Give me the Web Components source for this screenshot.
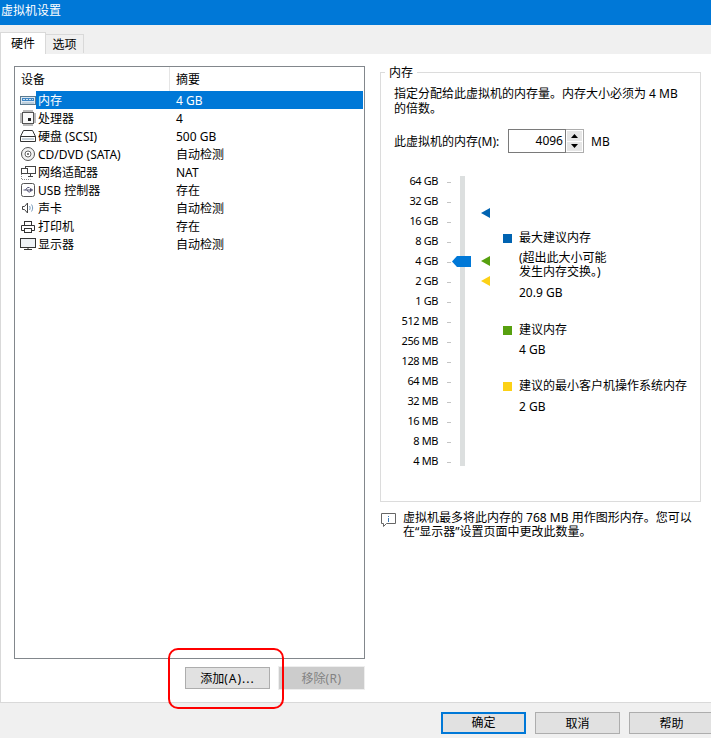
<!DOCTYPE html>
<html><head><meta charset="utf-8">
<style>
html,body{margin:0;padding:0;background:#fff}
body{width:711px;height:738px;overflow:hidden;position:relative;font:12px/16px "Noto Sans","Noto Sans CJK SC",sans-serif;color:#000}
</style></head><body>
<vm-dialog>
  <vm-tabs slot="tabs"></vm-tabs>
  <device-list slot="left"></device-list>
  <memory-panel slot="right"></memory-panel>
</vm-dialog>
<action-pair></action-pair>
<annot-mark></annot-mark>
<script>
function def(name,html,init){
  customElements.define(name,class extends HTMLElement{
    constructor(){super();this.attachShadow({mode:'open'}).innerHTML=html;if(init)init(this.shadowRoot,this)}
  });
}
def('vm-dialog',`<style>
:host{display:flex;flex-direction:column;width:711px;height:738px}
.title{height:25px;background:#0078d7;color:#fff;padding:2px 0 0 1px;box-sizing:border-box;line-height:17px;flex:none}
.body{flex:1;background:#fff;border-left:1px solid #d9d9d9;border-top:1px solid #d9d9d9;display:flex;padding:12px 10px 0 13px;gap:15px}
.foot{height:36px;flex:none;background:#f0f0f0;border-top:1px solid #d9d9d9;box-sizing:border-box;display:flex;justify-content:flex-end;gap:9px;padding:9px 0 0 0}
::slotted(device-list){flex:none}
::slotted(memory-panel){flex:1;min-width:0}
.r{margin-right:-3px}
</style>
<div class="title">虚拟机设置</div>
<slot name="tabs"></slot>
<div class="body"><slot name="left"></slot><slot name="right"></slot></div>
<div class="foot"><vm-btn w="85" primary>确定</vm-btn><vm-btn w="85">取消</vm-btn><vm-btn w="85" class="r">帮助</vm-btn></div>`);

def('vm-btn',`<style>
:host{display:flex;align-items:center;justify-content:center;box-sizing:border-box;height:22px;background:#e1e1e1;border:1px solid #adadad;flex:none;padding-top:1px}
:host([primary]){border:2px solid #0078d7;padding-top:0}
:host([disabled]){background:#cccccc;border:1px solid #cccccc;color:#838383;outline:1px solid #eee}
</style><slot></slot>`,(s,h)=>{h.style.width=h.getAttribute('w')+'px'});

def('vm-tabs',`<style>
:host{display:flex;align-items:flex-end;height:29px;background:#f0f0f0;flex:none;box-sizing:border-box;position:relative;z-index:1;margin-bottom:-1px}
.t{box-sizing:border-box;display:flex;align-items:center;justify-content:center}
.a{width:46px;height:22px;background:#fff;border:1px solid #d9d9d9;border-bottom:none}
.b{width:38px;height:19px;background:#f0f0f0;border:1px solid #d9d9d9;border-left:none;border-bottom:none;margin-bottom:1px;padding-top:1px}
</style><div class="t a">硬件</div><div class="t b">选项</div>`);

const icons={
mem:`<rect x="2.500" y="5.500" width="15" height="8" fill="#dbe8f3" stroke="#5b7a8f"/><rect x="4" y="7" width="12" height="3" fill="#3f86c4"/><path d="M5 8.500h10" stroke="#cfe3f3" stroke-dasharray="2 1"/><path d="M4 12h12" stroke="#9db4c4"/>`,
cpu:`<rect x="4.500" y="3.500" width="11" height="11" fill="#fafafa" stroke="#555"/><rect x="10" y="9" width="3" height="3" fill="#222"/><path d="M6 1v2M8 1v2M10 1v2M12 1v2M14 1v2M6 15v2M8 15v2M10 15v2M12 15v2M14 15v2M2 5h2M2 7h2M2 9h2M2 11h2M2 13h2M16 5h2M16 7h2M16 9h2M16 11h2M16 13h2" stroke="#777"/>`,
hdd:`<path d="M5.500 3.500h9l3 6v5h-15v-5z" fill="#fff" stroke="#333"/><path d="M2.500 9.500h15" stroke="#333"/><path d="M4 11h12v2H4z" fill="#c8d2d9"/>`,
cd:`<circle cx="10" cy="9" r="6.500" fill="#f2f2f2" stroke="#555"/><circle cx="10" cy="9" r="3" fill="#fff" stroke="#666"/><circle cx="10" cy="9" r="1" fill="#555"/>`,
net:`<rect x="7.500" y="3.500" width="10" height="7" fill="#fff" stroke="#444"/><path d="M12.500 10.500v3M10 13.500h5" stroke="#444"/><rect x="3.500" y="5.500" width="6" height="5" fill="#fff" stroke="#444"/><path d="M3.500 11v5.500h9" stroke="#888" stroke-dasharray="1 1" fill="none"/>`,
usb:`<rect x="3.500" y="2.500" width="13" height="13" rx="2" fill="#fff" stroke="#555"/><path d="M5.500 9h9M14.500 9l-2-1.500v3zM7.500 9l2-2.500h2M9 9l1.500 2h1.500" fill="none" stroke="#446" stroke-width=".9"/>`,
snd:`<path d="M4.500 7.500h2l3-3.500v10l-3-3.500h-2z" fill="#fff" stroke="#444"/><path d="M11.500 7c.8 1.300.8 2.700 0 4M13.500 5.500c1.500 2 1.500 5 0 7" fill="none" stroke="#7a9cbc"/>`,
prt:`<rect x="6.500" y="4.500" width="7" height="4" fill="#fff" stroke="#333"/><path d="M6.500 13.500h-3v-5h13v5h-3" fill="#fff" stroke="#333"/><rect x="6.500" y="11.500" width="7" height="4" fill="#fff" stroke="#333"/>`,
dsp:`<rect x="2.500" y="3.500" width="15" height="9" fill="#eef2f6" stroke="#333"/><path d="M6 14.500h8M10 12.500v2" stroke="#333"/>`};
def('dev-icon',`<style>:host{display:block;width:20px;height:18px;flex:none}svg{display:block}</style><svg width="20" height="18" viewBox="0 0 20 18"></svg>`,(s,h)=>{s.querySelector('svg').innerHTML=`<g transform="translate(2 0)">${icons[h.getAttribute('n')]}</g>`});

const rows=[['mem','内存','4 GB'],['cpu','处理器','4'],['hdd','硬盘 (SCSI)','500 GB'],['cd','CD/DVD (SATA)','自动检测'],['net','网络适配器','NAT'],['usb','USB 控制器','存在'],['snd','声卡','自动检测'],['prt','打印机','存在'],['dsp','显示器','自动检测']];
def('device-list',`<style>
:host{display:flex;flex-direction:column;box-sizing:border-box;width:351px;height:593px;border:1px solid #82878c;background:#fff}
.h{display:flex;height:24px;flex:none}
.h div{box-sizing:border-box;height:24px;line-height:26px;padding-left:6px;width:155px;border-right:1px solid #e5e5e5}
.h div+div{width:auto;flex:1;border:none;padding-left:6px}
.r{display:flex;height:18px;flex:none}
.r dev-icon{margin-left:1px}
.n{width:134px;padding-left:2px;box-sizing:border-box;flex:none;line-height:19px}
.v{flex:1;padding-left:6px;margin-right:1px;line-height:19px}
.sel .n,.sel .v{background:#0078d7;color:#fff}
</style><div class="h"><div>设备</div><div>摘要</div></div>
${rows.map((r,i)=>`<div class="r${i?'':' sel'}"><dev-icon n="${r[0]}"></dev-icon><div class="n">${r[1]}</div><div class="v">${r[2]}</div></div>`).join('')}`);

const labels=['64 GB','32 GB','16 GB','8 GB','4 GB','2 GB','1 GB','512 MB','256 MB','128 MB','64 MB','32 MB','16 MB','8 MB','4 MB'];
def('mem-scale',`<style>
:host{display:flex;height:300px;flex:none;position:relative}
.ls{width:52px;flex:none;text-align:right;font-size:11px;letter-spacing:-.4px;margin-top:-1px}
.l{height:20px;line-height:20px;white-space:nowrap}
.ts{width:22px;flex:none}
.t{height:20px;display:flex;align-items:center}
.t i{display:block;width:4px;height:1px;background:#c4c4c4;margin-left:9px}
.track{width:5px;height:290px;background:#dcdfdf;flex:none;margin-top:4px;position:relative}
.thumb{position:absolute;left:-8px;top:80px}
.ms{width:9px;margin-left:16px;flex:none;position:relative}
.ms svg{position:absolute;left:0}
</style><div class="ls">${labels.map(l=>`<div class="l">${l}</div>`).join('')}</div>
<div class="ts">${labels.map(()=>`<div class="t"><i></i></div>`).join('')}</div>
<div class="track"><svg class="thumb" width="19" height="11" viewBox="0 0 19 11"><path d="M0 5.500L5 0H19V11H5z" fill="#0078d7"/></svg></div>
<div class="ms">
<svg style="top:36px" width="9" height="10"><path d="M0 5L9 0V10z" fill="#0063b1"/></svg>
<svg style="top:84px" width="9" height="10"><path d="M0 5L9 0V10z" fill="#57a00f"/></svg>
<svg style="top:104px" width="9" height="10"><path d="M0 5L9 0V10z" fill="#fcd116"/></svg>
</div>`);

def('mem-legend',`<style>
:host{display:block;line-height:14px}
.k{display:flex;align-items:center;gap:7px;height:16px}
.k i{width:9px;height:9px;flex:none}
.b{padding-left:16px}
.g1{margin-top:5px}
.g2{margin-top:7px}
.sec{height:56px}
</style>
<div class="sec" style="height:92px"><div class="k"><i style="background:#0063b1"></i>最大建议内存</div>
<div class="b g1">(超出此大小可能<br>发生内存交换。)</div><div class="b g2">20.9 GB</div></div>
<div class="sec"><div class="k"><i style="background:#57a00f"></i>建议内存</div><div class="b g2" style="margin-top:5px">4 GB</div></div>
<div class="sec"><div class="k"><i style="background:#fcd116"></i>建议的最小客户机操作系统内存</div><div class="b g2" style="margin-top:6px">2 GB</div></div>`);

def('memory-panel',`<style>
:host{display:flex;flex-direction:column}
.box{margin:6px 0 0 0;height:430px;box-sizing:border-box;border:1px solid #dcdcdc;width:321px;position:relative}
.lg{position:absolute;left:4px;top:-8px;background:#fff;padding:0 4px;line-height:16px}
.in{padding:13px 8px 0 13px;line-height:15px}
.row{display:flex;align-items:center;margin-top:13px;height:24px}
.lab{width:114px;flex:none}
.sp{display:flex;height:24px}
.num{box-sizing:border-box;width:58px;border:1px solid #7a7a7a;text-align:right;line-height:22px;padding-right:2px}
.ud{box-sizing:border-box;width:18px;display:flex;flex-direction:column;gap:1px;background:#fff;border:1px solid #adadad;border-left:none;padding:1px}
.ud b{flex:1;background:#e6e6e6;display:flex;align-items:center;justify-content:center}
.unit{margin-left:7px}
.mid{display:flex;margin:19px 0 0 -8px}
.leg{margin:58px 0 0 13px}
.note{display:flex;margin-top:9px;line-height:14px;padding-left:1px}
.note svg{flex:none;margin:2px 7px 0 0}
</style>
<div class="box"><div class="lg">内存</div>
<div class="in">指定分配给此虚拟机的内存量。内存大小必须为 4 MB<br>的倍数。
<div class="row"><span class="lab">此虚拟机的内存(M):</span><div class="sp"><div class="num">4096</div><div class="ud"><b><svg width="7" height="4"><path d="M3.500 0L7 4H0z"/></svg></b><b><svg width="7" height="4"><path d="M0 0H7L3.500 4z"/></svg></b></div></div><span class="unit">MB</span></div>
<div class="mid"><mem-scale></mem-scale><mem-legend class="leg"></mem-legend></div></div>
</div>
<div class="note"><svg width="15" height="14" viewBox="0 0 15 14"><path d="M.5.5h14v10h-9l-3 3v-3h-2z" fill="#fff" stroke="#666"/><path d="M7.500 3v1M7.500 5v4" stroke="#3b78b4"/></svg><div>虚拟机最多将此内存的 768 MB 用作图形内存。您可以<br>在“显示器”设置页面中更改此数量。</div></div>`);

def('action-pair',`<style>
:host{position:absolute;left:185px;top:667px;display:flex;gap:9px}
.w{letter-spacing:1px}
.x{letter-spacing:.4px}
</style><vm-btn w="85">添加<span class="w">(A)...</span></vm-btn><vm-btn w="85" disabled>移除<span class="x">(R)</span></vm-btn>`);
def('annot-mark',`<style>
:host{position:absolute;left:168px;top:648px;width:116px;height:61px;box-sizing:border-box;border:2px solid #f00;border-radius:10px;z-index:5;display:block}
</style>`);
</script>
</body></html>
